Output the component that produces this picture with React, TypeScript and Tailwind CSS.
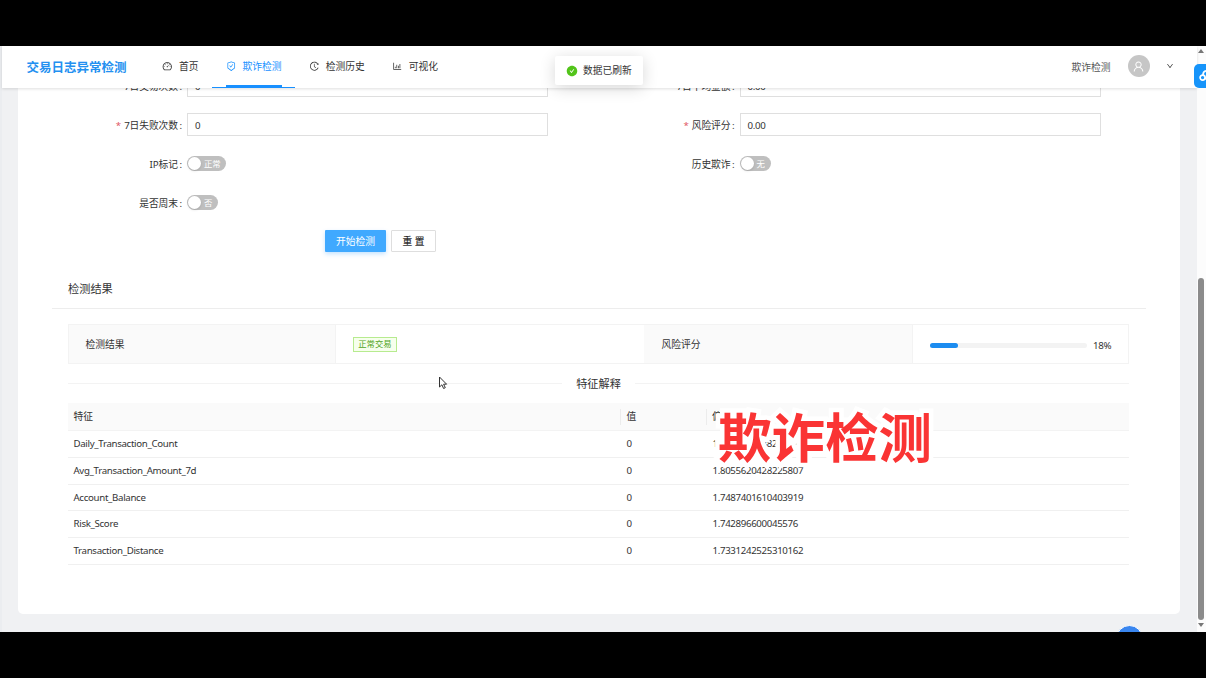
import type { ReactNode } from "react";
import {
  AiFillCheckCircle,
  AiOutlineBarChart,
  AiOutlineDashboard,
  AiOutlineDown,
  AiOutlineHistory,
  AiOutlineSafetyCertificate,
  AiOutlineUser,
} from "react-icons/ai";

const features = [
  { name: "Daily_Transaction_Count", value: "0", score: "1.8094230138218596" },
  { name: "Avg_Transaction_Amount_7d", value: "0", score: "1.8055620428225807" },
  { name: "Account_Balance", value: "0", score: "1.7487401610403919" },
  { name: "Risk_Score", value: "0", score: "1.742896600045576" },
  { name: "Transaction_Distance", value: "0", score: "1.7331242525310162" },
];

function NavItem({ icon, label, active }: { icon: ReactNode; label: string; active?: boolean }) {
  return (
    <div
      className={
        active
          ? "flex h-full flex-col px-[13.6px] text-[#1890ff] border-b border-[#1890ff]"
          : "flex h-full flex-col border-b border-transparent px-[13.6px]"
      }
    >
      <div className="flex h-[39px] items-center gap-[6.4px] pt-[2px]">
        <span className="text-[10.5px]">{icon}</span>
        <span>{label}</span>
      </div>
      {active && <div className="h-[2px] shrink-0 bg-[#1890ff]" />}
    </div>
  );
}

function Label({ text, required }: { text: string; required?: boolean }) {
  return (
    <div className="flex h-[23px] items-center justify-end pr-[5px] pt-[2px] whitespace-nowrap">
      {required && <span className="mr-[3px] text-[#e0555f]">*</span>}
      <span className="tracking-[-0.1px]">{text}</span>
      <span className="ml-[1.5px]">:</span>
    </div>
  );
}

function Input({ value }: { value: string }) {
  return (
    <div className="flex h-[23px] items-center border border-[#dfdfdf] bg-white pl-[7px] pt-[2px] text-[9.7px] tracking-[-0.3px]">
      {value}
    </div>
  );
}

function Toggle({ text, wide }: { text: string; wide?: boolean }) {
  return (
    <div className="flex h-[23px] items-center">
      <div
        className={
          wide
            ? "flex h-[15px] w-[39px] items-center gap-[3px] rounded-full bg-[#bfbfbf] pl-[1px] text-[8.4px] text-white"
            : "flex h-[15px] w-[31px] items-center gap-[3px] rounded-full bg-[#bfbfbf] pl-[1px] text-[8.4px] text-white"
        }
      >
        <span className="size-[13px] rounded-full bg-white shadow-sm" />
        <span className="pt-px">{text}</span>
      </div>
    </div>
  );
}

function Header() {
  return (
    <header className="relative z-10 flex h-[42px] w-[1195px] shrink-0 items-stretch bg-white pl-[24.5px] shadow-[0_1px_3px_rgba(0,0,0,0.13)]">
      <div className="flex w-[122px] items-center pt-[2px] text-[12.5px] font-bold text-[#2390f0]">交易日志异常检测</div>
      <nav className="flex">
        <NavItem icon={<AiOutlineDashboard />} label="首页" />
        <NavItem icon={<AiOutlineSafetyCertificate />} label="欺诈检测" active />
        <NavItem icon={<AiOutlineHistory />} label="检测历史" />
        <NavItem icon={<AiOutlineBarChart />} label="可视化" />
      </nav>
      <div className="ml-auto flex items-center pr-[23px] pb-[2px]">
        <span className="pt-[3px] text-[#555]">欺诈检测</span>
        <span className="ml-[17px] flex size-[22px] items-center justify-center rounded-full bg-[#c6c6c6] text-[13px] text-white">
          <AiOutlineUser />
        </span>
        <AiOutlineDown className="ml-[16.5px] text-[8px]" />
      </div>
    </header>
  );
}

function DetectionForm() {
  return (
    <div className="-mt-[14px] grid grid-cols-[169px_361px_191.5px_361.5px] gap-y-[16px]">
      <Label text="7日交易次数" required />
      <Input value="0" />
      <Label text="7日平均金额" required />
      <Input value="0.00" />
      <Label text="7日失败次数" required />
      <Input value="0" />
      <Label text="风险评分" required />
      <Input value="0.00" />
      <Label text="IP标记" />
      <Toggle text="正常" wide />
      <Label text="历史欺诈" />
      <Toggle text="无" />
      <Label text="是否周末" />
      <Toggle text="否" />
    </div>
  );
}

function Results() {
  return (
    <div className="ml-[50px] w-[1061px]">
      <div className="mt-[15px] flex h-[40px] items-stretch border border-[#f3f3f3]">
        <div className="flex w-[267px] items-center border-r border-[#f3f3f3] bg-[#fafafa] pl-[16.5px] pt-px">检测结果</div>
        <div className="flex w-[308px] items-center pl-[17px]">
          <span className="flex h-[15px] w-[44px] items-center justify-center border border-[#b7eb8f] bg-[#f6ffed] pt-px text-[8.4px] text-[#52a526]">
            正常交易
          </span>
        </div>
        <div className="flex w-[269px] items-center border-r border-[#f3f3f3] bg-[#fafafa] pl-[17.5px] pt-px">风险评分</div>
        <div className="flex flex-1 items-center pl-[16.5px] pt-[2px]">
          <div className="h-[5px] w-[157px] rounded-full bg-[#f3f3f3]">
            <div className="h-[5px] w-[18%] rounded-full bg-[#1c8cf0]" />
          </div>
          <span className="ml-[6.5px] pt-px text-[9.7px] tracking-[-0.3px]">18%</span>
        </div>
      </div>
      <div className="flex h-[39px] items-center gap-[14px]">
        <div className="h-px flex-1 bg-[#f3f3f3]" />
        <span className="pt-px text-[11.2px]">特征解释</span>
        <div className="h-px flex-1 bg-[#f3f3f3]" />
      </div>
      <div className="grid h-[28px] grid-cols-[553px_86px_1fr] items-center border-b border-[#f3f3f3] bg-[#fafafa]">
        <div className="flex h-[16px] items-center border-r border-[#ececec] pl-[5.5px] pt-px">特征</div>
        <div className="flex h-[16px] items-center border-r border-[#ececec] pl-[5.5px] pt-px">值</div>
        <div className="pl-[5px] pt-px">偏离度</div>
      </div>
      {features.map((f) => (
        <div
          key={f.name}
          className="grid h-[26.8px] grid-cols-[553px_86px_1fr] items-center border-b border-[#f0f0f0] text-[9.7px] tracking-[-0.34px]"
        >
          <div className="pl-[5.5px] tracking-[-0.32px]">{f.name}</div>
          <div className="pl-[5.5px]">{f.value}</div>
          <div className="pl-[5.5px]">{f.score}</div>
        </div>
      ))}
    </div>
  );
}

function ScrollTrack() {
  return (
    <div className="flex w-[9px] shrink-0 flex-col items-center bg-[#fcfcfc] pt-[3px] pb-[5px] pr-px">
      <svg width="6" height="4" viewBox="0 0 6 4">
        <path d="M3 0 6 4H0Z" fill="#777" />
      </svg>
      <div className="mt-auto h-[342px] w-[6px] rounded-full bg-[#8b8b8b]" />
      <svg className="mt-[3px]" width="6" height="4" viewBox="0 0 6 4">
        <path d="M0 0H6L3 4Z" fill="#777" />
      </svg>
    </div>
  );
}

export default function App() {
  return (
    <div className="relative h-[678px] w-[1206px] overflow-hidden bg-black pt-[46px] font-['Noto_Sans','Noto_Sans_CJK_SC',sans-serif] text-[9.75px] leading-none text-[#333]">
      <div className="relative flex h-[586px] overflow-hidden bg-[#f0f1f3]">
        <div className="w-[2px] shrink-0 bg-[#ebedf0]" />
        <div className="flex w-[1195px] shrink-0 flex-col">
          <Header />
          <main className="ml-[16px] h-[526px] w-[1162px] overflow-hidden rounded-b-[5px] bg-white">
            <DetectionForm />
            <div className="mt-[16px] flex gap-[5px] pl-[307px]">
              <button className="h-[22px] w-[61px] rounded-[1px] bg-[#40a9ff] pt-px text-white shadow-[0_2px_4px_rgba(24,144,255,0.25)]">
                开始检测
              </button>
              <button className="h-[22px] w-[45px] rounded-[1px] border border-[#dedede] bg-white pt-px font-medium">重 置</button>
            </div>
            <div className="ml-[34px] mt-[17px] flex h-[40px] w-[1094px] items-center border-b border-[#ededed] pl-[16px] text-[11.2px]">
              检测结果
            </div>
            <Results />
          </main>
        </div>
        <ScrollTrack />

        <div className="absolute left-[1116px] top-[579px] z-20 size-[27px] rounded-full border border-white bg-[#3a86ef]" />
        <div className="absolute left-[1194px] top-[18px] z-20 flex h-[24px] w-[24px] items-center rounded-[5px] bg-[#1694fa] pl-[5px]">
          <svg width="16" height="14" viewBox="0 0 16 14" fill="none" stroke="white" strokeWidth="1.7">
            <circle cx="3.6" cy="8.6" r="2.5" />
            <path d="M4 6C4 3.2 5.8 1.8 8 1.8s4 1.6 4 4M5.5 10.3 9 6.8" />
            <circle cx="11.5" cy="8.6" r="2.5" />
          </svg>
        </div>
        <div className="absolute left-[555px] top-[10px] z-20 flex h-[29px] w-[88px] items-center gap-[5px] rounded-[2px] bg-white pl-[11px] shadow-[0_3px_16px_rgba(0,0,0,0.16)]">
          <AiFillCheckCircle className="text-[12px] text-[#52c41a]" />
          <span className="pt-px">数据已刷新</span>
        </div>
      </div>

      <svg className="absolute left-[438px] top-[376px] z-30" width="10" height="14" viewBox="0 0 10 14">
        <path d="M1.5 1v10l2.4-2.2 1.7 3.7 1.7-.8-1.7-3.5h3Z" fill="white" stroke="#333" strokeWidth="1" />
      </svg>
      <div className="absolute left-[718px] top-[411px] z-30 whitespace-nowrap text-[53.5px] font-bold leading-[54px] text-[#fa3434] [-webkit-text-stroke:9px_white] [paint-order:stroke_fill] [stroke-linejoin:round]">
        欺诈检测
      </div>
    </div>
  );
}
